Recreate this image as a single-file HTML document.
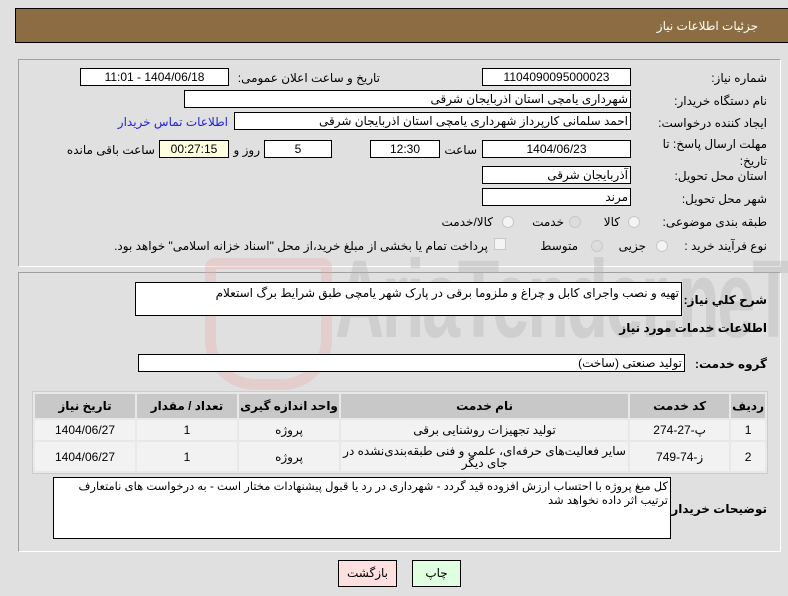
<!DOCTYPE html>
<html><head><meta charset="utf-8"><style>
body{margin:0;width:788px;height:596px;background:#e0e0e0;font-family:Tahoma,"Liberation Sans","DejaVu Sans",sans-serif;font-size:12px;position:relative;overflow:hidden;color:#000}
.a{position:absolute}
.box{position:absolute;background:#fff;border:1px solid #000;box-sizing:border-box;height:18px;line-height:16px;text-align:center;direction:rtl;white-space:nowrap;overflow:hidden}
.l{position:absolute;direction:rtl;white-space:nowrap;text-align:right}
.panel{position:absolute;border:1px solid #a0a0a0;border-right-color:#fff;border-bottom-color:#fff;box-sizing:border-box}
.rad{position:absolute;width:12px;height:12px;border-radius:50%;border:1px solid #c8c8c8;background:#f4f4f4;box-sizing:border-box}
table{border-collapse:separate;border-spacing:2px;background:#e8e8e8;border:1px solid #ccc}
td{text-align:center;direction:rtl;font-size:12px}
th{background:#c8c8c8;font-size:12px;height:22px;direction:rtl}
tr.r td{background:#f2f2f2}
</style></head><body>
<div class="a" style="left:15px;top:8px;width:775px;height:35px;background:#8c6d43;border:1px solid #000;box-sizing:border-box"></div>
<div class="l" style="right:30px;top:19px;color:#fff;font-size:12px">جزئیات اطلاعات نیاز</div>

<div class="panel" style="left:18px;top:59px;width:763px;height:208px"></div>
<div class="panel" style="left:18px;top:272px;width:763px;height:280px"></div>

<!-- watermark -->
<div class="a" style="left:335px;top:245px;font-size:110px;font-weight:bold;color:#b0b0b0;opacity:.35;letter-spacing:-4px;font-family:'Liberation Sans',sans-serif;transform:scaleX(.62);transform-origin:left;line-height:110px">AriaTender.neT</div>
<div class="a" style="left:205px;top:258px;width:105px;height:110px;border:11px solid #e8a8a8;border-radius:10px 10px 50px 50px;opacity:.35"></div>

<div class="l" style="right:21px;top:71px">شماره نیاز:</div>
<div class="box" style="left:482px;top:68px;width:149px">1104090095000023</div>
<div class="l" style="right:408px;top:71px">تاریخ و ساعت اعلان عمومی:</div>
<div class="box" style="left:80px;top:68px;width:149px">1404/06/18 - 11:01</div>

<div class="l" style="right:21px;top:94px">نام دستگاه خریدار:</div>
<div class="box" style="left:184px;top:90px;width:447px;text-align:right;padding-right:2px">شهرداری یامچی استان اذربایجان شرقی</div>

<div class="l" style="right:21px;top:116px">ایجاد کننده درخواست:</div>
<div class="box" style="left:234px;top:112px;width:397px;text-align:right;padding-right:2px">احمد سلمانی کارپرداز شهرداری یامچی استان اذربایجان شرقی</div>
<div class="l" style="right:560px;top:115px;color:#2222dd">اطلاعات تماس خریدار</div>

<div class="l" style="right:21px;top:136px;line-height:17px;text-align:right">مهلت ارسال پاسخ: تا<br>تاریخ:</div>
<div class="box" style="left:482px;top:140px;width:149px">1404/06/23</div>
<div class="l" style="right:311px;top:143px">ساعت</div>
<div class="box" style="left:370px;top:140px;width:70px">12:30</div>
<div class="box" style="left:264px;top:140px;width:68px">5</div>
<div class="l" style="right:528px;top:143px">روز و</div>
<div class="box" style="left:159px;top:140px;width:70px;background:#ffffe0">00:27:15</div>
<div class="l" style="right:633px;top:143px">ساعت باقی مانده</div>

<div class="l" style="right:21px;top:169px">استان محل تحویل:</div>
<div class="box" style="left:482px;top:166px;width:149px;text-align:right;padding-right:2px">آذربایجان شرقی</div>
<div class="l" style="right:21px;top:192px">شهر محل تحویل:</div>
<div class="box" style="left:482px;top:188px;width:149px;text-align:right;padding-right:2px">مرند</div>

<div class="l" style="right:21px;top:215px">طبقه بندی موضوعی:</div>
<div class="rad" style="left:628px;top:216px"></div><div class="l" style="right:168px;top:215px">کالا</div>
<div class="rad" style="left:569px;top:216px;background:#ddd"></div><div class="l" style="right:224px;top:215px">خدمت</div>
<div class="rad" style="left:502px;top:216px"></div><div class="l" style="right:295px;top:215px">کالا/خدمت</div>

<div class="l" style="right:21px;top:239px">نوع فرآیند خرید :</div>
<div class="rad" style="left:656px;top:240px"></div><div class="l" style="right:142px;top:239px">جزیی</div>
<div class="rad" style="left:591px;top:240px;background:#ddd"></div><div class="l" style="right:210px;top:239px">متوسط</div>
<div class="a" style="left:494px;top:238px;width:12px;height:12px;border:1px solid #c8c8c8;background:#f4f4f4;box-sizing:border-box"></div>
<div class="l" style="right:300px;top:239px">پرداخت تمام یا بخشی از مبلغ خرید،از محل "اسناد خزانه اسلامی" خواهد بود.</div>

<div class="l" style="right:21px;top:293px;font-weight:bold">شرح کلي نیاز:</div>
<div class="box" style="left:135px;top:282px;width:547px;height:34px;text-align:right;padding-right:2px;line-height:20px">تهیه و نصب واجرای کابل و چراغ و ملزوما برقی در پارک شهر یامچی طبق شرایط برگ استعلام</div>

<div class="l" style="right:21px;top:321px;font-weight:bold">اطلاعات خدمات مورد نیاز</div>
<div class="l" style="right:21px;top:357px;font-weight:bold">گروه خدمت:</div>
<div class="box" style="left:138px;top:354px;width:547px;text-align:right;padding-right:2px">تولید صنعتی (ساخت)</div>

<table class="a" style="left:32px;top:391px;width:736px;height:80px;direction:rtl">
<tr><th style="width:30px">ردیف</th><th style="width:97px">کد خدمت</th><th>نام خدمت</th><th style="width:98px">واحد اندازه گیری</th><th style="width:98px">تعداد / مقدار</th><th style="width:98px">تاریخ نیاز</th></tr>
<tr class="r" style="height:20px"><td>1</td><td>پ-27-274</td><td>تولید تجهیزات روشنایی برقی</td><td>پروژه</td><td>1</td><td>1404/06/27</td></tr>
<tr class="r" style="height:29px"><td>2</td><td>ز-74-749</td><td style="line-height:12px">سایر فعالیت‌های حرفه‌ای، علمی و فنی طبقه‌بندی‌نشده در جای دیگر</td><td>پروژه</td><td>1</td><td>1404/06/27</td></tr>
</table>

<div class="l" style="right:21px;top:502px;font-weight:bold">توضیحات خریدار:</div>
<div class="box" style="left:53px;top:477px;width:618px;height:62px;text-align:right;padding-right:2px;white-space:normal;line-height:14px;padding-top:2px;font-size:11.5px;letter-spacing:-0.2px">کل مبغ پروژه با احتساب ارزش افزوده قید گردد - شهرداری در رد یا قبول پیشنهادات مختار است - به درخواست های نامتعارف ترتیب اثر داده نخواهد شد</div>

<div class="box" style="left:338px;top:560px;width:59px;height:27px;line-height:25px;background:#ffe0e0">بازگشت</div>
<div class="box" style="left:412px;top:560px;width:49px;height:27px;line-height:25px;background:#e0ffe0">چاپ</div>
</body></html>
